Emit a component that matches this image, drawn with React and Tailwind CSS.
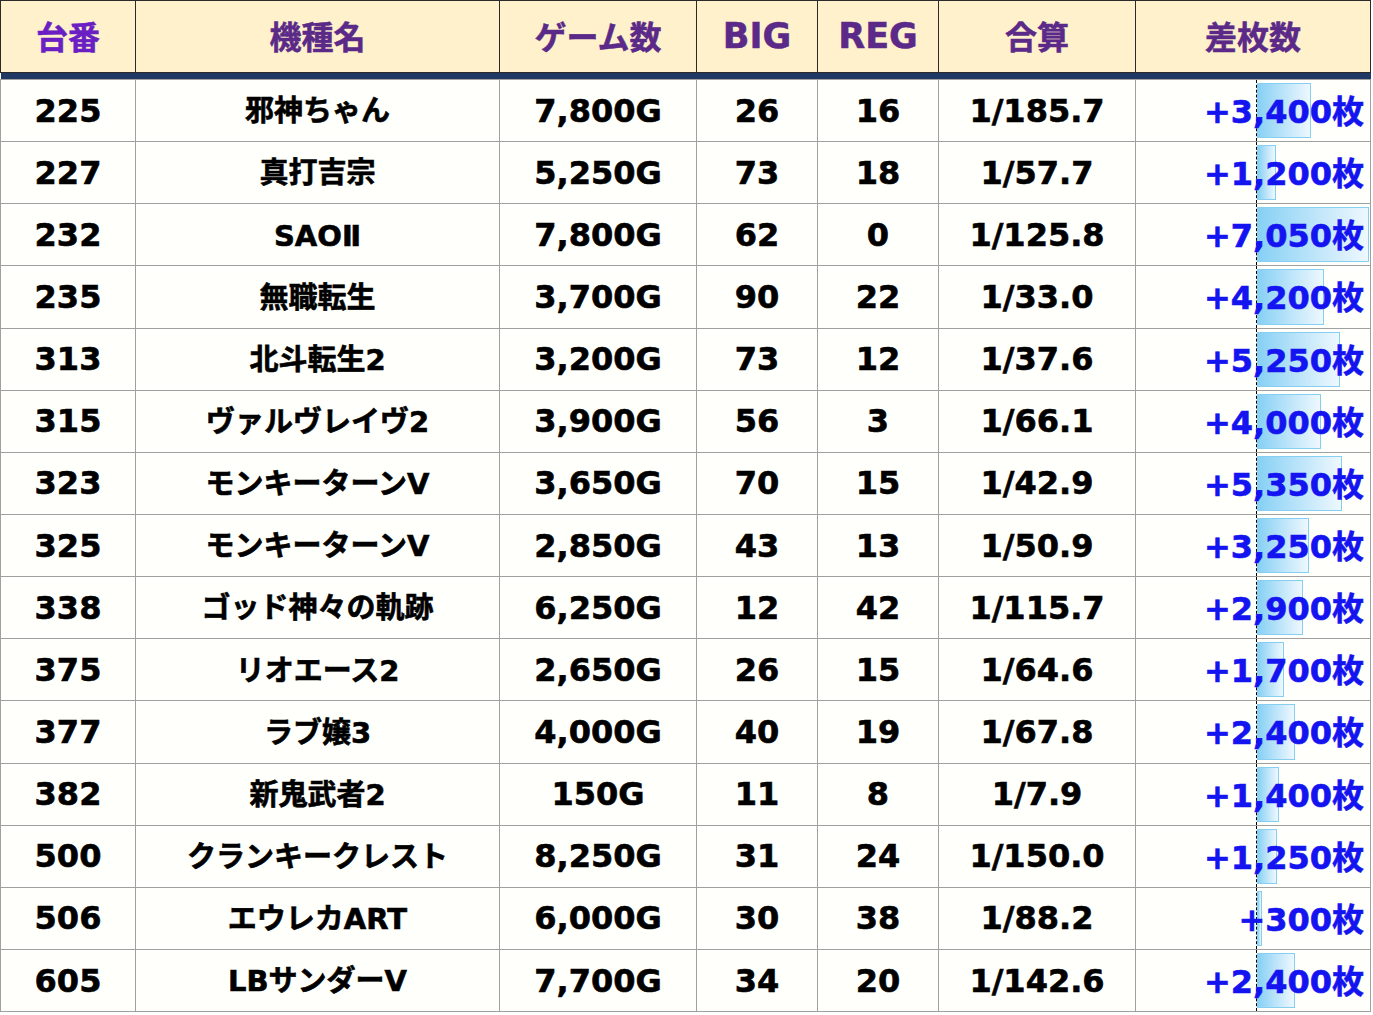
import React from "react";

const rows = [
  ["225", "邪神ちゃん", "7,800G", "26", "16", "1/185.7", 3400],
  ["227", "真打吉宗", "5,250G", "73", "18", "1/57.7", 1200],
  ["232", "SAOⅡ", "7,800G", "62", "0", "1/125.8", 7050],
  ["235", "無職転生", "3,700G", "90", "22", "1/33.0", 4200],
  ["313", "北斗転生2", "3,200G", "73", "12", "1/37.6", 5250],
  ["315", "ヴァルヴレイヴ2", "3,900G", "56", "3", "1/66.1", 4000],
  ["323", "モンキーターンV", "3,650G", "70", "15", "1/42.9", 5350],
  ["325", "モンキーターンV", "2,850G", "43", "13", "1/50.9", 3250],
  ["338", "ゴッド神々の軌跡", "6,250G", "12", "42", "1/115.7", 2900],
  ["375", "リオエース2", "2,650G", "26", "15", "1/64.6", 1700],
  ["377", "ラブ嬢3", "4,000G", "40", "19", "1/67.8", 2400],
  ["382", "新鬼武者2", "150G", "11", "8", "1/7.9", 1400],
  ["500", "クランキークレスト", "8,250G", "31", "24", "1/150.0", 1250],
  ["506", "エウレカART", "6,000G", "30", "38", "1/88.2", 300],
  ["605", "LBサンダーV", "7,700G", "34", "20", "1/142.6", 2400],
];

const font = { fontFamily: '"DejaVu Sans", "Noto Sans CJK JP", sans-serif' };
const cjk = { fontFamily: '"Noto Sans CJK JP", sans-serif' };

const headers = [
  { t: "台番", w: "w-[135px]", c: "text-[#6a1ec4]" },
  { t: "機種名", w: "w-[364px]", c: "text-[#5b2a88]" },
  { t: "ゲーム数", w: "w-[197px]", c: "text-[#5b2a88]" },
  { t: "BIG", w: "w-[121px]", c: "text-[#5b2a88]" },
  { t: "REG", w: "w-[121px]", c: "text-[#5b2a88]" },
  { t: "合算", w: "w-[197px]", c: "text-[#5b2a88]" },
  { t: "差枚数", w: "w-[235px]", c: "text-[#5b2a88]" },
];

const num =
  "border border-[#a0a0a0] text-center text-[32px] font-bold text-black p-0 [-webkit-text-stroke:0.6px_#000]";

export default function App() {
  return (
    <div className="w-[1373px] h-[1015px] bg-white overflow-hidden">
      <table className="table-fixed border-collapse w-[1370px]" style={font}>
        <thead>
          <tr className="h-[72px] bg-[#fff1cc]">
            {headers.map((h) => {
              const latin = h.t === "BIG" || h.t === "REG";
              return (
                <th
                  key={h.t}
                  className={`${h.w} ${h.c} border border-[#2a2a2a] ${latin ? "text-[35px] p-0" : "text-[32px] p-0 pb-[4px]"} font-bold text-center align-middle [-webkit-text-stroke:0.5px_currentColor]`}
                  style={latin ? font : cjk}
                >
                  {h.t}
                </th>
              );
            })}
          </tr>
          <tr className="h-[7px]">
            <td colSpan={7} className="p-0 bg-[#1f3864]"></td>
          </tr>
        </thead>
        <tbody>
          {rows.map((r, i) => (
            <tr key={i} className="h-[62.15px] bg-[#fffffb]">
              <td className={num}>{r[0]}</td>
              <td className="border border-[#a0a0a0] text-center text-[29px] font-bold text-black p-0 pt-[3px] [-webkit-text-stroke:0.6px_#000]">
                {r[1]}
              </td>
              <td className={num}>{r[2]}</td>
              <td className={num}>{r[3]}</td>
              <td className={num}>{r[4]}</td>
              <td className={num}>{r[5]}</td>
              <td className="border border-[#a0a0a0] p-0 relative">
                <div className="absolute top-0 bottom-0 left-[120px] border-l border-dashed border-black"></div>
                <div
                  className="absolute top-[3px] bottom-[3px] left-[121px] border border-[#86cff3] bg-gradient-to-r from-[#86d0f4] to-[#eef8fe]"
                  style={{ width: `${(r[6] * 112) / 7050}px` }}
                ></div>
                <div className="relative text-right pr-[6px] text-[32px] font-bold text-[#1414f0] [-webkit-text-stroke:0.6px_#1414f0]">
                  +{r[6].toLocaleString("en-US")}
                  <span style={cjk}>枚</span>
                </div>
              </td>
            </tr>
          ))}
        </tbody>
      </table>
    </div>
  );
}
